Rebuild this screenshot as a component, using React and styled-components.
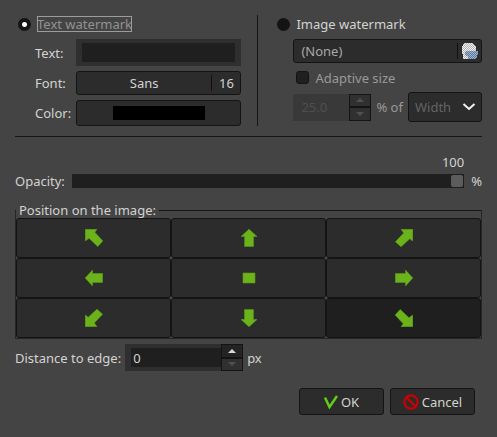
import React, { useState } from 'react';
import styled, { createGlobalStyle, css } from 'styled-components';


const GlobalStyle = createGlobalStyle`
  * {
    box-sizing: border-box;
  }

  body {
    margin: 0;
    background: #444444;
    color: #d3d3d0;
    font: 13px/16px "Noto Sans", "Open Sans", sans-serif;
  }

  button, input, select {
    margin: 0;
    color: inherit;
    font: inherit;
  }
`;

const Dialog = styled.form`
  padding: 15px 15px 22px;
`;

const Sources = styled.div`
  display: grid;
  grid-template-columns: minmax(0, 12fr) 1px minmax(0, 11fr);
  gap: 16px;
  padding-bottom: 10px;
  border-bottom: 1px solid #161616;
`;

const Divider = styled.div`
  background: #161616;
`;

const ChoiceRow = styled.div`
  display: flex;
  align-items: center;
  gap: 6px;
  height: 18px;
  padding-left: 3px;
  margin-bottom: 6px;
`;

const Radio = styled.input`
  appearance: none;
  width: 13px;
  height: 13px;
  border-radius: 50%;
  background: #141414;

  &:checked {
    background: radial-gradient(circle, #ffffff 2px, #141414 3px);
  }
`;

const ChoiceLabel = styled.label`
  ${({ $focused }) => $focused && css`
    color: #929292;
    outline: 1px solid #9c9c9c;
    outline-offset: -1px;
  `}
`;

const Fields = styled.div`
  display: grid;
  grid-template-columns: 41px 1fr;
  align-items: center;
  row-gap: 5px;
  padding-left: 20px;
`;

const TextField = styled.input`
  width: 100%;
  min-width: 0;
  height: 27px;
  padding: 0 2px;
  border: solid #2f2f2f;
  border-width: 4px 6px;
  background: #1f1f1f;
  outline: none;
`;

const Button = styled.button`
  display: flex;
  align-items: center;
  justify-content: center;
  width: 100%;
  height: ${({ $height }) => $height || 27}px;
  padding: 0;
  border: 1px solid #141414;
  border-radius: 3px;
  background: #2c2c2c;
`;

const ButtonText = styled.span`
  flex: 1;
  text-align: ${({ $align }) => $align || 'center'};
  padding-left: ${({ $align }) => ($align ? 7 : 0)}px;
`;

const ButtonEnd = styled.span`
  display: flex;
  justify-content: center;
  width: ${({ $width }) => $width}px;
  height: 16px;
  border-left: 1px solid #111111;
`;

const Swatch = styled.span`
  width: 92px;
  height: 14px;
  background: #000000;
`;

const ImageFields = styled.div`
  padding-left: 19px;
  color: #999999;
`;

const FileButton = styled(Button)`
  color: #a9a9a9;
`;

const CheckRow = styled.div`
  display: flex;
  align-items: center;
  gap: 6px;
  height: 29px;
  padding-left: 3px;
`;

const Checkbox = styled.input`
  appearance: none;
  width: 13px;
  height: 13px;
  border: 1px solid #141414;
  border-radius: 3px;
  background: #202020;
`;

const SizeRow = styled.div`
  display: flex;
  align-items: center;
  justify-content: space-between;
  height: 30px;
`;

const Spin = styled.div`
  display: flex;
  width: ${({ $width }) => $width}px;
  height: 27px;
`;

const SpinInput = styled.input`
  flex: 1;
  min-width: 0;
  padding: 0 2px;
  border: solid #2f2f2f;
  border-width: 4px 0 4px 6px;
  border-radius: 0;
  background: #1f1f1f;
  outline: none;
  appearance: textfield;

  &::-webkit-inner-spin-button {
    appearance: none;
  }

  &:disabled {
    border-color: #393939;
    background: #393939;
    color: #4f4f4f;
  }
`;

const SpinButtons = styled.div`
  display: grid;
  grid-template-rows: 1fr 1fr;
  width: 22px;
`;

const SpinButton = styled.button`
  display: flex;
  align-items: center;
  justify-content: center;
  min-height: 0;
  padding: 0;
  border: 1px solid #141414;
  background: #242424;
  color: #d8d8d8;

  &:disabled {
    background: #303030;
    color: #505050;
  }
`;

const SelectBox = styled.div`
  position: relative;
  width: 74px;

  svg {
    position: absolute;
    top: 11px;
    right: 6px;
    pointer-events: none;
  }
`;

const Select = styled.select`
  appearance: none;
  width: 100%;
  height: 30px;
  padding: 0 6px;
  border: 1px solid #141414;
  border-radius: 3px;
  background: #2c2c2c;

  &:disabled {
    color: #646464;
    opacity: 1;
  }
`;

const Opacity = styled.div`
  display: grid;
  grid-template-columns: auto 1fr auto;
  align-items: center;
  column-gap: 7px;
  row-gap: 3px;
  margin: 17px 0 13px;
`;

const OpacityValue = styled.output`
  grid-column: 2;
  text-align: right;
`;

const Slider = styled.input`
  grid-column: 2;
  appearance: none;
  width: 100%;
  height: 14px;
  padding: 0 1px;
  background: #1f1f1f;

  &::-webkit-slider-thumb {
    appearance: none;
    width: 12px;
    height: 12px;
    border-radius: 2px;
    background: #5c5c5c;
  }
`;

const OpacityLabel = styled.label`
  grid-column: 1;
`;

const Position = styled.fieldset`
  min-width: 0;
  margin: 0;
  padding: 0;
  border: 1px solid #262626;
  border-top-color: #161616;

  legend {
    padding: 0 3px;
  }
`;

const PositionGrid = styled.div`
  display: grid;
  grid-template-columns: repeat(3, 1fr);
`;

const PositionButton = styled(Button)`
  &[aria-pressed='true'] {
    background: #1f1f1f;
  }
`;

const Distance = styled.div`
  display: flex;
  align-items: center;
  gap: 4px;
  margin-top: 5px;
`;

const Actions = styled.div`
  display: flex;
  justify-content: flex-end;
  gap: 6px;
  margin-top: 17px;
  padding-right: 7px;
`;

const ActionButton = styled(Button)`
  gap: 3px;
  width: 85px;
`;


const POSITIONS = [
  { name: 'Top left', shape: 'diagonal', angle: 0 },
  { name: 'Top', shape: 'straight', angle: 0 },
  { name: 'Top right', shape: 'diagonal', angle: 90 },
  { name: 'Left', shape: 'straight', angle: 270 },
  { name: 'Center', shape: 'center', angle: 0 },
  { name: 'Right', shape: 'straight', angle: 90 },
  { name: 'Bottom left', shape: 'diagonal', angle: 270 },
  { name: 'Bottom', shape: 'straight', angle: 180 },
  { name: 'Bottom right', shape: 'diagonal', angle: 180 },
];

const SHAPES = {
  diagonal: 'M0.2 0.2H12L9.8 3.2L17.8 12L12.8 17.6L4 9.3L0.2 12Z',
  straight: 'M9 0.2L17 7.5H13.5V17.6H4.6V7.5H1Z',
  center: 'M3 4H15V14H3Z',
};

function PositionIcon({ shape, angle }) {
  return (
    <svg width="18" height="18" viewBox="0 0 18 18" aria-hidden="true">
      <path
        d={SHAPES[shape]}
        transform={`rotate(${angle} 9 9)`}
        fill="#6cb31b"
        stroke="#5b9c16"
        strokeWidth="0.6"
      />
    </svg>
  );
}

function FileIcon() {
  return (
    <svg width="16" height="16" viewBox="0 0 16 16" shapeRendering="crispEdges" aria-hidden="true">
      <defs>
        <pattern id="paper" width="2" height="2" patternUnits="userSpaceOnUse">
          <path d="M0 0H2V2H0Z" fill="#f0f0f0" />
          <path d="M0 0H1V1H0ZM1 1H2V2H1Z" fill="#b4b4b4" />
        </pattern>
        <pattern id="folder" width="2" height="2" patternUnits="userSpaceOnUse">
          <path d="M0 0H2V2H0Z" fill="#9db4d0" />
          <path d="M0 0H1V1H0ZM1 1H2V2H1Z" fill="#61789a" />
        </pattern>
      </defs>
      <path d="M2 0H11L12 2L14 4V16H1V12L0 10V3H1Z" fill="url(#paper)" />
      <path d="M4 8H16V11L15 12V15H14V16H6V13H4L3 10Z" fill="url(#folder)" />
    </svg>
  );
}

function ChevronIcon() {
  return (
    <svg width="14" height="8" viewBox="0 0 14 8" fill="none" aria-hidden="true">
      <path d="M1.5 1L7 6L12.5 1" stroke="#f2f2f2" strokeWidth="2" />
    </svg>
  );
}

function TriangleIcon({ down }) {
  return (
    <svg width="8" height="4" viewBox="0 0 8 4" aria-hidden="true">
      <path d={down ? 'M0 0H8L4 4Z' : 'M0 4H8L4 0Z'} fill="currentColor" />
    </svg>
  );
}

function OkIcon() {
  return (
    <svg width="14" height="16" viewBox="0 0 14 16" fill="none" aria-hidden="true">
      <path d="M1 3.5L5.5 13L13 2" stroke="#62cf16" strokeWidth="2.4" />
    </svg>
  );
}

function CancelIcon() {
  return (
    <svg width="16" height="16" viewBox="0 0 16 16" fill="none" aria-hidden="true">
      <circle cx="8" cy="8" r="6.6" stroke="#cc0000" strokeWidth="2.2" />
      <path d="M3.5 3.5L12.5 12.5" stroke="#cc0000" strokeWidth="2.4" />
    </svg>
  );
}

function SpinBox({ id, width, disabled, value, onChange, label }) {
  const number = Number(value);

  return (
    <Spin $width={width}>
      <SpinInput
        id={id}
        type="number"
        aria-label={label}
        value={value}
        disabled={disabled}
        onChange={e => onChange(e.target.value)}
      />
      <SpinButtons>
        <SpinButton
          type="button"
          aria-label="Increase"
          disabled={disabled}
          onClick={() => onChange(String(number + 1))}
        >
          <TriangleIcon />
        </SpinButton>
        <SpinButton
          type="button"
          aria-label="Decrease"
          disabled={disabled || number <= 0}
          onClick={() => onChange(String(number - 1))}
        >
          <TriangleIcon down />
        </SpinButton>
      </SpinButtons>
    </Spin>
  );
}


function App() {
  const [source, setSource] = useState('text');
  const [text, setText] = useState('');
  const [adaptive, setAdaptive] = useState(false);
  const [size, setSize] = useState('25.0');
  const [opacity, setOpacity] = useState(100);
  const [position, setPosition] = useState('Bottom right');
  const [distance, setDistance] = useState('0');

  return (
    <Dialog onSubmit={e => e.preventDefault()}>
      <GlobalStyle />
      <Sources>
        <div>
          <ChoiceRow>
            <Radio
              type="radio"
              id="source-text"
              name="source"
              checked={source === 'text'}
              onChange={() => setSource('text')}
            />
            <ChoiceLabel htmlFor="source-text" $focused={source === 'text'}>
              Text watermark
            </ChoiceLabel>
          </ChoiceRow>
          <Fields>
            <label htmlFor="text">Text:</label>
            <TextField id="text" type="text" value={text} onChange={e => setText(e.target.value)} />
            <label htmlFor="font">Font:</label>
            <Button id="font" type="button" $height={24}>
              <ButtonText>Sans</ButtonText>
              <ButtonEnd $width={29}>16</ButtonEnd>
            </Button>
            <label htmlFor="color">Color:</label>
            <Button id="color" type="button" $height={26}>
              <Swatch />
            </Button>
          </Fields>
        </div>
        <Divider />
        <div>
          <ChoiceRow>
            <Radio
              type="radio"
              id="source-image"
              name="source"
              checked={source === 'image'}
              onChange={() => setSource('image')}
            />
            <ChoiceLabel htmlFor="source-image">Image watermark</ChoiceLabel>
          </ChoiceRow>
          <ImageFields>
            <FileButton type="button" $height={24}>
              <ButtonText $align="left">(None)</ButtonText>
              <ButtonEnd $width={24}>
                <FileIcon />
              </ButtonEnd>
            </FileButton>
            <CheckRow>
              <Checkbox
                type="checkbox"
                id="adaptive"
                checked={adaptive}
                onChange={e => setAdaptive(e.target.checked)}
              />
              <label htmlFor="adaptive">Adaptive size</label>
            </CheckRow>
            <SizeRow>
              <SpinBox
                id="size"
                label="Size"
                width={78}
                disabled={!adaptive}
                value={size}
                onChange={setSize}
              />
              <label htmlFor="dimension">% of</label>
              <SelectBox>
                <Select id="dimension" disabled={!adaptive}>
                  <option>Width</option>
                </Select>
                <ChevronIcon />
              </SelectBox>
            </SizeRow>
          </ImageFields>
        </div>
      </Sources>

      <Opacity>
        <OpacityValue htmlFor="opacity">{opacity}</OpacityValue>
        <OpacityLabel htmlFor="opacity">Opacity:</OpacityLabel>
        <Slider
          id="opacity"
          type="range"
          min="0"
          max="100"
          value={opacity}
          onChange={e => setOpacity(e.target.value)}
        />
        <span>%</span>
      </Opacity>

      <Position>
        <legend>Position on the image:</legend>
        <PositionGrid>
          {POSITIONS.map(({ name, shape, angle }) => (
            <PositionButton
              key={name}
              type="button"
              $height={40}
              aria-label={name}
              aria-pressed={position === name}
              onClick={() => setPosition(name)}
            >
              <PositionIcon shape={shape} angle={angle} />
            </PositionButton>
          ))}
        </PositionGrid>
      </Position>

      <Distance>
        <label htmlFor="distance">Distance to edge:</label>
        <SpinBox id="distance" width={118} value={distance} onChange={setDistance} />
        <span>px</span>
      </Distance>

      <Actions>
        <ActionButton type="submit">
          <OkIcon />
          OK
        </ActionButton>
        <ActionButton type="button">
          <CancelIcon />
          Cancel
        </ActionButton>
      </Actions>
    </Dialog>
  );
}


export default App;
